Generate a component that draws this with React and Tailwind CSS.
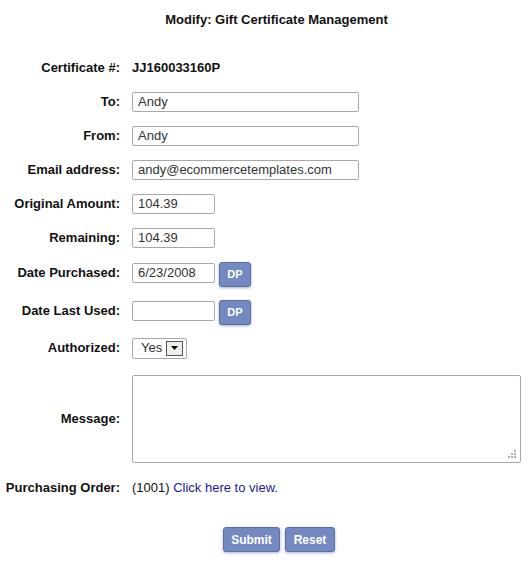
import React from "react";

const font = { fontFamily: '"Liberation Sans", Arial, sans-serif' };

const Row = ({ label, h, children }) => (
  <div className={`flex items-center ${h}`}>
    <div className="w-[120px] text-right font-bold text-[13px] text-[#111]">{label}</div>
    <div className="ml-[12px] flex items-center">{children}</div>
  </div>
);

const TextInput = ({ w, value }) => (
  <div
    className={`${w} h-[20px] border border-[#a8a8a8] rounded-[2px] bg-white pl-[5px] text-[13px] leading-[18px] text-[#333]`}
  >
    {value}
  </div>
);

const BlueBtn = ({ children, className }) => (
  <button
    className={`bg-[#7489bf] border border-[#5a6ea8] rounded-[3px] text-white font-bold text-[11px] shadow-[0_1px_3px_rgba(60,80,140,0.45)] ${className}`}
  >
    {children}
  </button>
);

export default function App() {
  return (
    <div className="w-[529px] h-[563px] bg-white text-[#111] overflow-hidden" style={font}>
      <div className="h-[40px] flex items-center justify-center pl-[24px] font-bold text-[13px]">
        Modify: Gift Certificate Management
      </div>
      <div className="mt-[11px] flex flex-col">
        <Row label="Certificate #:" h="h-[34px]">
          <span className="font-bold text-[13px]">JJ160033160P</span>
        </Row>
        <Row label="To:" h="h-[34px]">
          <TextInput w="w-[227px]" value="Andy" />
        </Row>
        <Row label="From:" h="h-[34px]">
          <TextInput w="w-[227px]" value="Andy" />
        </Row>
        <Row label="Email address:" h="h-[34px]">
          <TextInput w="w-[227px]" value="andy@ecommercetemplates.com" />
        </Row>
        <Row label="Original Amount:" h="h-[34px]">
          <TextInput w="w-[83px]" value="104.39" />
        </Row>
        <Row label="Remaining:" h="h-[34px]">
          <TextInput w="w-[83px]" value="104.39" />
        </Row>
        <Row label="Date Purchased:" h="h-[35px]">
          <TextInput w="w-[83px]" value="6/23/2008" />
          <BlueBtn className="ml-[4px] w-[32px] h-[25px] mt-[3px]">DP</BlueBtn>
        </Row>
        <Row label="Date Last Used:" h="h-[41px]">
          <TextInput w="w-[83px]" value="" />
          <BlueBtn className="ml-[4px] w-[32px] h-[25px] mt-[3px]">DP</BlueBtn>
        </Row>
        <Row label="Authorized:" h="h-[34px]">
          <div className="w-[55px] h-[21px] border border-[#a8a8a8] rounded-[2px] flex items-center pl-[8px] text-[13px] text-[#333]">
            <span>Yes</span>
            <span className="ml-[4px] w-[17px] h-[15px] border border-[#555] bg-[#eee] flex items-center justify-center">
              <svg width="7" height="4" viewBox="0 0 7 4">
                <path d="M0 0h7L3.5 4z" fill="#000" />
              </svg>
            </span>
          </div>
        </Row>
        <Row label="Message:" h="h-[107px]">
          <div className="relative w-[389px] h-[88px] border border-[#a8a8a8] rounded-[2px] bg-white">
            <svg className="absolute right-[4px] bottom-[4px]" width="9" height="9" viewBox="0 0 9 9">
              <g fill="#b0b0b0">
                <rect x="7" y="1" width="2" height="2" />
                <rect x="4" y="4" width="2" height="2" />
                <rect x="7" y="4" width="2" height="2" />
                <rect x="1" y="7" width="2" height="2" />
                <rect x="4" y="7" width="2" height="2" />
                <rect x="7" y="7" width="2" height="2" />
              </g>
            </svg>
          </div>
        </Row>
        <Row label="Purchasing Order:" h="h-[32px]">
          <span className="text-[13px] text-[#111]">
            (1001) <a href="#" className="text-[#23229a]">Click here</a>
            <span className="text-[#23229a]"> to view.</span>
          </span>
        </Row>
      </div>
      <div className="mt-[23px] flex justify-center gap-[5px] pl-[29px]">
        <BlueBtn className="w-[57px] h-[25px] text-[12px]">Submit</BlueBtn>
        <BlueBtn className="w-[50px] h-[25px] text-[12px]">Reset</BlueBtn>
      </div>
    </div>
  );
}
